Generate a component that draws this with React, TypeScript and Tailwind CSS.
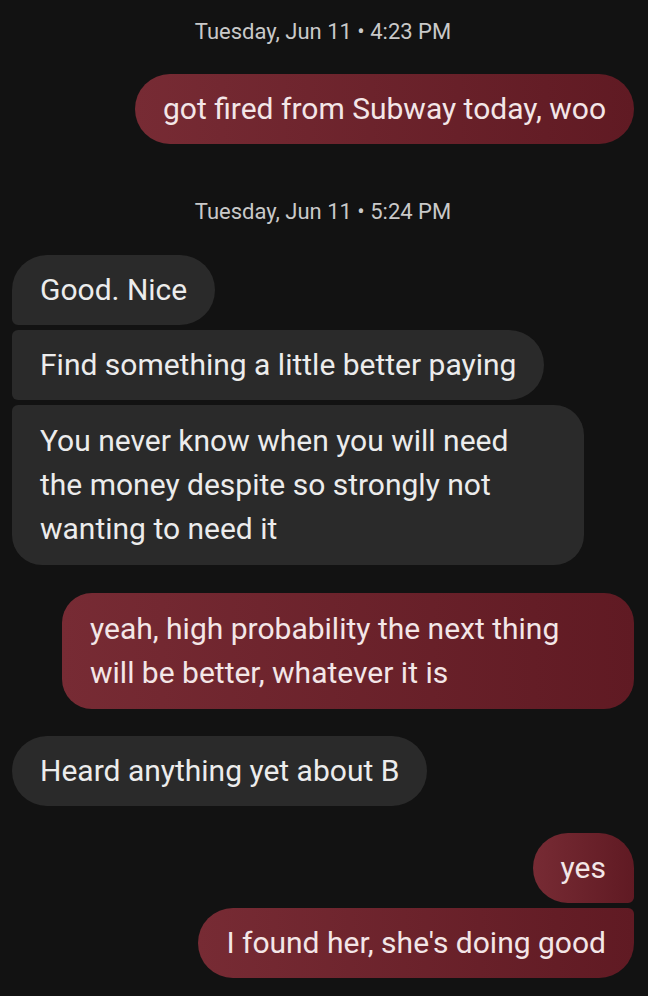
import React from 'react';

type Msg = {
    text: string;
    side: 'in' | 'out';
    corners: string;
    gap: string;
    multi?: boolean;
};

const Stamp: React.FC<{ label: string; className: string }> = ({ label, className }) => (
    <div className={`text-center text-[22px] leading-[28px] text-[#c9c9c9] ${className}`}>{label}</div>
);

const Bubble: React.FC<{ msg: Msg }> = ({ msg }) => {
    const base = `max-w-[572px] px-[28px] ${msg.multi ? 'py-[14px]' : 'py-[13px]'} text-[30px] leading-[44px]`;
    const tone =
        msg.side === 'out'
            ? 'self-end bg-linear-to-r from-[#772b34] to-[#601a23] text-[#f3e6e7]'
            : 'self-start bg-[#2a2a2a] text-[#ececec]';
    return <div className={`${base} ${tone} ${msg.corners} ${msg.gap}`}>{msg.text}</div>;
};

const FIRST: Msg = {
    text: 'got fired from Subway today, woo',
    side: 'out',
    corners: 'rounded-[35px]',
    gap: '',
};

const THREAD: Msg[] = [
    { text: 'Good. Nice', side: 'in', corners: 'rounded-[35px] rounded-bl-[6px]', gap: '' },
    { text: 'Find something a little better paying', side: 'in', corners: 'rounded-[35px] rounded-tl-[6px] rounded-bl-[6px]', gap: 'mt-[5px]' },
    {
        text: 'You never know when you will need the money despite so strongly not wanting to need it',
        side: 'in',
        corners: 'rounded-[30px] rounded-tl-[6px]',
        gap: 'mt-[5px]',
        multi: true,
    },
    {
        text: 'yeah, high probability the next thing will be better, whatever it is',
        side: 'out',
        corners: 'rounded-[30px]',
        gap: 'mt-[28px]',
        multi: true,
    },
    { text: 'Heard anything yet about B', side: 'in', corners: 'rounded-[35px]', gap: 'mt-[27px]' },
    { text: 'yes', side: 'out', corners: 'rounded-[35px] rounded-br-[6px]', gap: 'mt-[27px]' },
    { text: "I found her, she's doing good", side: 'out', corners: 'rounded-[35px] rounded-tr-[6px]', gap: 'mt-[5px]' },
];

const App: React.FC = () => {
    return (
        <div className="min-h-screen w-full bg-[#121212] font-['Roboto','Noto_Sans',sans-serif]">
            <div className="flex flex-col pl-[12px] pr-[14px] pt-[18px] pb-[18px]">
                <Stamp label="Tuesday, Jun 11 • 4:23 PM" className="mb-[28px]" />
                <Bubble msg={FIRST} />
                <Stamp label="Tuesday, Jun 11 • 5:24 PM" className="mt-[54px] mb-[29px]" />
                {THREAD.map((m, i) => (
                    <Bubble key={i} msg={m} />
                ))}
            </div>
        </div>
    );
};

export default App;
